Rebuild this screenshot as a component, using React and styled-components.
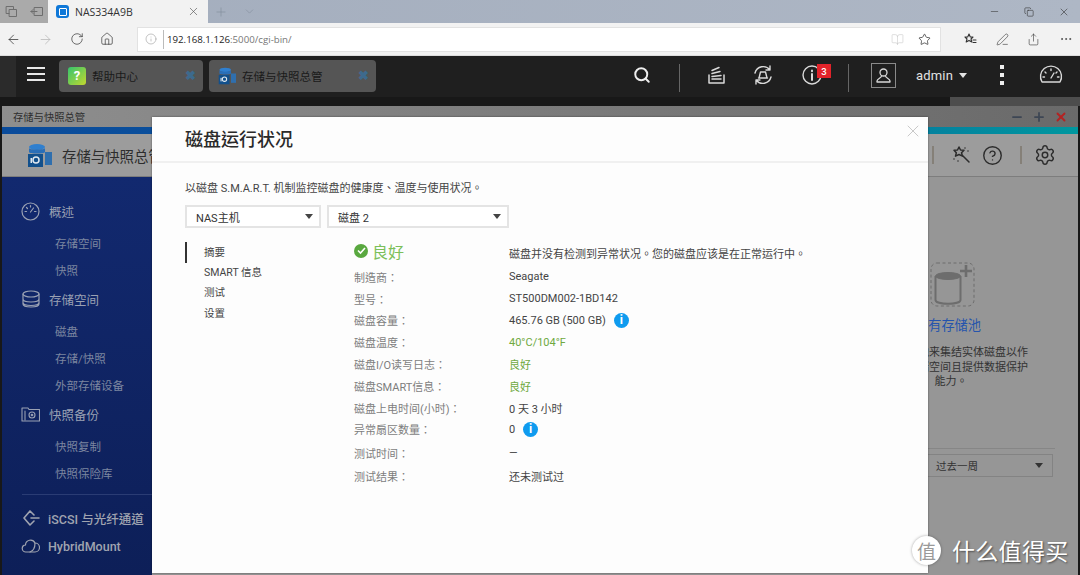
import React from "react";
import styled, { createGlobalStyle } from "styled-components";
import { ArrowLeft, ArrowRight, RotateCw, Home, Info, Star, X, Plus, ChevronDown, Minus, Copy, MoreHorizontal, Search, BookOpen, Share, PenLine, HelpCircle, Settings } from "lucide-react";

const Global = createGlobalStyle`
  html, body { margin: 0; padding: 0; width: 1080px; height: 575px; overflow: hidden; background: #1b1b1b; }
  * { box-sizing: border-box; }
  body { font-family: Roboto, "Noto Sans CJK TC", sans-serif; }
`;
const Page = styled.div`width:1080px;height:575px;display:flex;flex-direction:column;overflow:hidden;`;

/* browser chrome */
const TabStrip = styled.div`height:23px;display:flex;background:linear-gradient(90deg,#a3adbd,#aeb7c5);`;
const StripLeft = styled.div`width:48px;display:flex;align-items:center;gap:12px;padding-left:5px;background:#aaaaaa;color:#6e6e6e;`;
const BrowserTab = styled.div`width:160px;background:#f2f2f2;display:flex;align-items:center;padding:0 8px;color:#333;font:10.5px "Open Sans",sans-serif;`;
const TabLogo = styled.div`width:13px;height:13px;border-radius:3px;background:#0f78d8;margin-right:6px;display:flex;align-items:center;justify-content:center;&::after{content:"";width:6px;height:6px;border:1.5px solid #fff;border-radius:1px;}`;
const TabTitle = styled.span`flex:1;`;
const StripActions = styled.div`display:flex;align-items:center;gap:15px;padding-left:6px;flex:1;color:#85909f;`;
const WinControls = styled.div`display:flex;align-items:center;gap:24px;padding-right:10px;color:#333;`;
const Toolbar = styled.div`height:33px;background:#f2f2f2;display:flex;align-items:center;color:#333;border-bottom:1px solid #ddd;`;
const NavIcons = styled.div`width:137px;display:flex;align-items:center;gap:16.8px;padding-left:6px;`;
const AddressBar = styled.div`width:804px;height:25px;background:#fff;border:1px solid #e2e2e2;display:flex;align-items:center;padding:0 9px 0 7px;`;
const AddressSep = styled.div`width:1px;height:19px;background:#bbb;margin:0 3px 0 6px;`;
const Url = styled.div`flex:1;font:9.7px "Open Sans",sans-serif;color:#777;b{font-weight:400;color:#222;}`;
const AddressIcons = styled.div`display:flex;align-items:center;gap:14px;`;
const ToolIcons = styled.div`flex:1;display:flex;align-items:center;justify-content:space-between;padding:0 7px 0 22px;`;

/* QTS bar */
const QtsBar = styled.div`height:41px;background:#1f1f1f;display:flex;align-items:center;color:#d9d9d9;position:relative;`;
const BarEdge = styled.div`width:16px;height:41px;background:#2b2b2b;`;
const Burger = styled.div`width:18px;margin:0 14px 5px 11px;display:flex;flex-direction:column;gap:4px;span{height:2px;background:#e8e8e8;}`;
const AppTab = styled.div`width:${p=>p.$w}px;height:32px;margin-right:6px;margin-bottom:2px;background:#555555;border-radius:4px;display:flex;align-items:center;padding:0 7px 0 9px;color:#1a1a1a;font-size:11.5px;`;
const AppTabLabel = styled.span`flex:1;margin-left:6px;`;
const AppTabClose = styled.span`color:#3d6a8d;font-size:13px;font-weight:700;`;
const Help = styled.div`width:18px;height:18px;border-radius:3px;background:linear-gradient(135deg,#35c46e,#c3d82e);color:#fff;font-size:13px;font-weight:700;display:flex;align-items:center;justify-content:center;`;
const BarRight = styled.div`margin-left:auto;display:flex;align-items:center;height:100%;`;
const BarSlot = styled.div`width:${p=>p.$w}px;padding-left:${p=>p.$pl||0}px;padding-right:${p=>p.$pr||0}px;display:flex;justify-content:${p=>p.$end?"flex-end":"center"};align-items:center;position:relative;margin-bottom:3px;`;
const BarSep = styled.div`width:1px;height:28px;background:#666;margin-top:2px;`;
const Badge = styled.span`position:absolute;top:-1px;left:42px;width:14px;height:14px;background:#e2232a;color:#fff;font-size:9.5px;font-weight:500;display:flex;align-items:center;justify-content:center;`;
const UserBox = styled.div`width:25px;height:25px;border:1px solid #8a8a8a;display:flex;align-items:center;justify-content:center;`;
const Admin = styled.div`font-size:13px;color:#e2e2e2;display:flex;align-items:center;gap:6px;margin-right:5px;letter-spacing:.2px;&::after{content:"";border:4px solid transparent;border-top:5px solid #e2e2e2;border-bottom:0;}`;
const Dots = styled.div`display:flex;flex-direction:column;gap:4px;span{width:4px;height:4px;background:#eee;}`;

/* desktop */
const Desktop = styled.div`flex:1;position:relative;background:#181818;display:flex;flex-direction:column;padding:9px 2px 0;min-height:0;`;
const DesktopTint = styled.div`position:absolute;right:0;top:0;width:130px;height:9px;background:#4d4d4d;`;
const Win = styled.div`flex:1;display:flex;flex-direction:column;position:relative;min-height:0;`;
const WinTitle = styled.div`height:21px;background:linear-gradient(90deg,#8e8e8e,#7c7c7c 50%,#6a6a6a);display:flex;align-items:center;padding:0 10px 0 11px;color:#2e2e2e;font-size:10.3px;`;
const WinTitleText = styled.span`flex:1;`;
const WinBtns = styled.div`display:flex;align-items:center;gap:8px;`;
const Accent = styled.div`height:7px;background:linear-gradient(90deg,#0a4b9b,#0a5a9d 60%,#00979f);`;
const AppHead = styled.div`height:43px;background:#9c9c9c;border-bottom:1px solid #7d7d7d;display:flex;align-items:center;padding:0 22px 0 25px;color:#2d2d2d;`;
const AppName = styled.div`font-size:14.4px;margin-left:10px;flex:1;white-space:nowrap;`;
const HeadSep = styled.div`width:2px;height:18px;background:#858078;`;
const HeadIcons = styled.div`display:flex;align-items:center;color:#2c2c2c;`;
const Gap = styled.span`width:${p=>p.$w}px;`;
const Body = styled.div`flex:1;display:flex;min-height:0;`;
const Sidebar = styled.div`width:150px;background:linear-gradient(180deg,#12296f,#0d1f58);padding-top:20px;color:#8a93a8;flex-shrink:0;`;
const Group = styled.div``;
const SectionRow = styled.div`height:28px;display:flex;align-items:center;padding-left:19px;font-size:12.5px;color:#9aa1b3;gap:9px;white-space:nowrap;`;
const IconBox = styled.div`width:19px;display:flex;justify-content:center;`;
const SubList = styled.div`padding-top:6px;`;
const SubItem = styled.div`height:27px;line-height:27px;padding-left:53px;font-size:11.5px;color:#7c86a0;`;
const SideDivider = styled.div`height:1px;background:#2a3c74;margin:6px 0 9px 20px;`;
const BigRow = styled(SectionRow)`height:28px;font-weight:500;color:#a0a4b0;gap:8px;`;
const Main = styled.div`flex:1;background:#969696;position:relative;display:flex;justify-content:flex-end;`;
const Empty = styled.div`width:154px;margin-right:50px;display:flex;flex-direction:column;align-items:center;padding-top:85px;`;
const PoolIconWrap = styled.div`color:#6d6d6d;line-height:0;transform:translateX(1px);`;
const PoolTitle = styled.div`font-size:13.2px;color:#2554ad;margin-top:8px;transform:translateX(-3px);`;
const PoolText = styled.div`font-size:11px;line-height:14.5px;color:#333;text-align:center;margin-top:12px;`;
const RangeRow = styled.div`width:160px;position:absolute;right:23px;top:271px;border-top:1px solid #868686;padding:5px 0 0 22px;`;
const Range = styled.div`height:23px;border:1px solid #838383;display:flex;align-items:center;justify-content:space-between;padding:0 9px 0 18px;margin-right:2px;font-size:10.5px;color:#333;&::after{content:"";border:4px solid transparent;border-top:5px solid #333;border-bottom:0;}`;

/* modal */
const Modal = styled.div`position:absolute;left:150px;top:11px;width:776px;height:456px;background:#fdfdfd;box-shadow:0 0 2px rgba(0,0,0,.45);color:#444;`;
const ModalHead = styled.div`height:46px;border-bottom:2px solid #f0f0f0;padding:13px 33px 0;font-size:18px;line-height:20px;font-weight:500;color:#2a2a2a;`;
const ModalClose = styled.div`position:absolute;right:5px;top:4px;color:#c4c4c4;line-height:0;`;
const ModalBody = styled.div`padding:18px 33px 0;`;
const Desc = styled.div`font-size:11px;line-height:15px;color:#444;`;
const Selects = styled.div`display:flex;gap:6px;margin-top:9px;`;
const SelectBox = styled.div`width:${p=>p.$w}px;height:23px;border:2px solid #e4e4e4;background:#fff;display:flex;align-items:center;justify-content:space-between;padding:0 6px 0 9px;font-size:11px;color:#333;&::after{content:"";border:4px solid transparent;border-top:5px solid #444;border-bottom:0;}`;
const Columns = styled.div`display:flex;margin-top:14px;`;
const NavCol = styled.div`width:169px;`;
const NavItem = styled.div`height:20.4px;line-height:20.4px;padding-left:17px;font-size:10.5px;color:#444;border-left:2px solid ${p=>p.$on?"#333":"transparent"};${p=>p.$on?"height:21px;line-height:21px;":""}`;
const Grid = styled.div`display:grid;grid-template-columns:155px 1fr;font-size:11px;`;
const Label = styled.div`height:${p=>p.$h||21.8}px;display:flex;align-items:center;color:#7d7d7d;`;
const Value = styled.div`height:${p=>p.$h||21.8}px;display:flex;align-items:center;gap:8px;color:${p=>p.$g?"#6fa93f":"#444"};`;
const Good = styled(Label)`color:#7cbf5a;font-size:16px;gap:4px;padding-bottom:7px;`;
const GoodMsg = styled(Value)`padding-bottom:2px;`;
const CheckDot = styled.span`width:14px;height:14px;border-radius:50%;background:#59a83f;display:flex;align-items:center;justify-content:center;`;
const InfoDot = styled.span`width:15px;height:15px;border-radius:50%;background:#0f9bef;color:#fff;font:700 12px/15px Roboto,sans-serif;text-align:center;`;

/* watermark */
const Mark = styled.div`position:absolute;left:912px;top:439px;display:flex;align-items:center;gap:11px;color:#fff;font-family:"Noto Sans CJK SC",sans-serif;`;
const MarkDot = styled.div`width:29px;height:29px;border-radius:50%;background:#fff;color:#9a9a9a;font-size:19px;display:flex;align-items:center;justify-content:center;box-shadow:0 0 3px rgba(0,0,0,.35);`;
const MarkText = styled.div`font-size:23px;letter-spacing:.3px;line-height:29px;text-shadow:1px 1px 2px rgba(0,0,0,.5);`;

const Svg = ({ w, h = w, sw = 1.4, children, vb }) => (
  <svg width={w} height={h} viewBox={vb || `0 0 ${w} ${h}`} fill="none" stroke="currentColor" strokeWidth={sw} strokeLinecap="round" strokeLinejoin="round">{children}</svg>
);
const DbLogo = ({ s = 25 }) => (
  <svg width={s} height={s} viewBox="0 0 25 25">
    <ellipse cx="10" cy="4" rx="8" ry="3" fill="#2f7fcf" />
    <path d="M2 5v4c0 2 16 2 16 0V5c0 2-16 2-16 0z" fill="#2a6fb8" />
    <path d="M18 9h7v13h-7z" fill="#2f6fae" />
    <rect x="1" y="11" width="15" height="13" fill="#12508c" />
    <circle cx="9" cy="17" r="3" fill="none" stroke="#dfe8f0" strokeWidth="1.5" />
    <rect x="3.5" y="15" width="1.5" height="5" fill="#dfe8f0" />
  </svg>
);

const rows = [
  ["制造商：", "Seagate"],
  ["型号：", "ST500DM002-1BD142"],
  ["磁盘容量：", "465.76 GB (500 GB)", "i"],
  ["磁盘温度：", "40°C/104°F", "g"],
  ["磁盘I/O读写日志：", "良好", "g"],
  ["磁盘SMART信息：", "良好", "g"],
  ["磁盘上电时间(小时)：", "0 天 3 小时"],
  ["异常扇区数量：", "0", "i"],
];

export default function App() {
  return (
    <Page>
      <Global />
      <TabStrip>
        <StripLeft>
          <Svg w={13} sw={1}><rect x="1.5" y="1.5" width="7" height="7" /><rect x="4.5" y="4.5" width="7" height="7" fill="#aaa" /></Svg>
          <Svg w={13} sw={1}><rect x="4.5" y="2.5" width="8" height="8" /><path d="M1 6.5h6M3 4.5l-2 2 2 2" /></Svg>
        </StripLeft>
        <BrowserTab>
          <TabLogo /><TabTitle>NAS334A9B</TabTitle><X size={13} strokeWidth={1.2} color="#555" />
        </BrowserTab>
        <StripActions><Plus size={14} strokeWidth={1.2} /><ChevronDown size={13} strokeWidth={1.2} /></StripActions>
        <WinControls><Minus size={11} strokeWidth={1.2} /><Copy size={10} strokeWidth={1.4} /><X size={12} strokeWidth={1.2} /></WinControls>
      </TabStrip>
      <Toolbar>
        <NavIcons>
          <ArrowLeft size={15} strokeWidth={1.2} />
          <ArrowRight size={15} strokeWidth={1.2} color="#b5b5b5" />
          <RotateCw size={14} strokeWidth={1.2} />
          <Home size={14} strokeWidth={1.2} />
        </NavIcons>
        <AddressBar>
          <Info size={12} strokeWidth={1} color="#888" />
          <AddressSep />
          <Url><b>192.168.1.126</b>:5000/cgi-bin/</Url>
          <AddressIcons>
            <BookOpen size={13} strokeWidth={1} color="#c4c4c4" />
            <Star size={13} strokeWidth={1.4} color="#333" />
          </AddressIcons>
        </AddressBar>
        <ToolIcons>
          <Svg w={14} sw={1.1}><path d="M6 2l1.3 3H10L8 7l.8 3L6 8.4 3.2 10 4 7 2 5h2.7zM10 8h3M10 10.5h3" /></Svg>
          <PenLine size={13} strokeWidth={1.1} />
          <Share size={13} strokeWidth={1.1} />
          <MoreHorizontal size={14} strokeWidth={1.2} />
        </ToolIcons>
      </Toolbar>
      <QtsBar>
        <BarEdge />
        <Burger><span /><span /><span /></Burger>
        <AppTab $w={144}><Help>?</Help><AppTabLabel>帮助中心</AppTabLabel><AppTabClose>✖</AppTabClose></AppTab>
        <AppTab $w={167}><DbLogo s={18} /><AppTabLabel>存储与快照总管</AppTabLabel><AppTabClose>✖</AppTabClose></AppTab>
        <BarRight>
          <BarSlot $w={72} $pr={3}><Search size={18} strokeWidth={2.6} color="#eee" /></BarSlot>
          <BarSep />
          <BarSlot $w={71}>
            <Svg w={20} sw={1.5}><path d="M3 10v8h15v-8M6 14h9M6 11.5l9-1M6 8.5l8-2M6 5.5l7-3" /></Svg>
          </BarSlot>
          <BarSlot $w={24}>
            <Svg w={22} sw={1.4}><path d="M3 9a8.5 8.5 0 0 1 15-3M19 13a8.5 8.5 0 0 1-15 3M18 2v4h-4M4 20v-4h4" /><path d="M7 14l1.5-6h5L15 14zM6.5 14h9" /></Svg>
          </BarSlot>
          <BarSlot $w={73}>
            <Svg w={20} sw={1.4}><circle cx="10" cy="10" r="9" /><path d="M10 9v6M10 5.5v.8" strokeWidth="2" /></Svg>
            <Badge>3</Badge>
          </BarSlot>
          <BarSep />
          <BarSlot $w={47} $end>
            <UserBox>
              <Svg w={17} sw={1.3}><circle cx="8.5" cy="5.5" r="3.5" /><path d="M6.5 9c0 2-4.5 2.5-4.5 5v1h13v-1c0-2.5-4.500-3-4.500-5" /></Svg>
            </UserBox>
          </BarSlot>
          <BarSlot $w={96}><Admin>admin</Admin></BarSlot>
          <BarSlot $w={20}><Dots><span /><span /><span /></Dots></BarSlot>
          <BarSlot $w={68} $pl={10}>
            <Svg w={24} h={20} sw={1.4}><path d="M3 17a10.5 10.5 0 1 1 18 0zM12 13l3-5M12 4v1.5M6 7l1 1M18 7l-1 1M4 12h1.5M20 12h-1.5" /></Svg>
          </BarSlot>
        </BarRight>
      </QtsBar>
      <Desktop>
        <DesktopTint />
        <Win>
          <WinTitle>
            <WinTitleText>存储与快照总管</WinTitleText>
            <WinBtns>
              <Minus size={14} strokeWidth={3} color="#3d4654" />
              <Plus size={14} strokeWidth={3} color="#3d4654" />
              <X size={14} strokeWidth={3.2} color="#b32323" />
            </WinBtns>
          </WinTitle>
          <Accent />
          <AppHead>
            <DbLogo />
            <AppName>存储与快照总管</AppName>
            <HeadIcons>
              <HeadSep />
              <Gap $w={17} />
              <Svg w={20} sw={1.5}><path d="M8 2l1.5 3 3.5.2-2.5 2.6 1 3.4L8 9.5 4.5 11.2l.8-3.4L3 5.2 6.5 5zM11 10l7 7" /><path d="M14 3v.1M17 6v.1M3 14v.1M7 16v.1" /></Svg>
              <Gap $w={11} />
              <HelpCircle size={21} strokeWidth={1.6} />
              <Gap $w={17} />
              <HeadSep />
              <Gap $w={12} />
              <Settings size={22} strokeWidth={1.6} />
            </HeadIcons>
          </AppHead>
          <Body>
            <Sidebar>
              <Group>
                <SectionRow><IconBox><Svg w={19} sw={1.2}><circle cx="9.5" cy="9.5" r="8.5" /><path d="M9.5 10l3-4M9.5 3.5v1.5M4 9.5h1.5M15 9.5h-1.5M5.5 5.5l1 1" /></Svg></IconBox>概述</SectionRow>
                <SubList><SubItem>存储空间</SubItem><SubItem>快照</SubItem></SubList>
              </Group>
              <Group>
                <SectionRow><IconBox><Svg w={18} sw={1.2}><ellipse cx="9" cy="4" rx="8" ry="3" /><path d="M1 4v10c0 4 16 4 16 0V4M1 9c0 4 16 4 16 0M1 12.5c0 4 16 4 16 0" /></Svg></IconBox>存储空间</SectionRow>
                <SubList><SubItem>磁盘</SubItem><SubItem>存储/快照</SubItem><SubItem>外部存储设备</SubItem></SubList>
              </Group>
              <Group>
                <SectionRow><IconBox><Svg w={19} h={15} sw={1.1}><path d="M1 1h6l1 1.5h10.5V14H1z" /><circle cx="11" cy="8" r="3" /><circle cx="11" cy="8" r=".8" /><path d="M4 4v9" /></Svg></IconBox>快照备份</SectionRow>
                <SubList><SubItem>快照复制</SubItem><SubItem>快照保险库</SubItem></SubList>
              </Group>
              <SideDivider />
              <BigRow><IconBox><Svg w={18} h={16} sw={1.6}><path d="M8 1L2 8l6 7M8 1l4 4M8 15l4-4M9 8h8" /></Svg></IconBox>iSCSI 与光纤通道</BigRow>
              <BigRow><IconBox><Svg w={19} h={14} sw={1.2}><path d="M5 13a3.5 3.5 0 0 1-.5-7A5 5 0 0 1 14 4a4.5 4.5 0 0 1 0 9z" /><path d="M9 13c3-1 5-4 5-9" /></Svg></IconBox>HybridMount</BigRow>
            </Sidebar>
            <Main>
              <Empty>
                <PoolIconWrap>
                  <svg width="45" height="45" viewBox="0 0 45 45" fill="none" stroke="currentColor">
                    <rect x="1" y="1" width="43" height="43" rx="6" strokeDasharray="3 2.5" strokeWidth="1" />
                    <ellipse cx="18" cy="14" rx="12.5" ry="3.5" fill="currentColor" />
                    <path d="M5.5 14v24c0 5 25 5 25 0V14" strokeWidth="2" />
                    <path d="M36 3v12M30 9h12" strokeWidth="2.6" />
                  </svg>
                </PoolIconWrap>
                <PoolTitle>没有存储池</PoolTitle>
                <PoolText>使用存储池来集结实体磁盘以作<br />为一个存储空间且提供数据保护<br />能力。</PoolText>
              </Empty>
              <RangeRow><Range>过去一周</Range></RangeRow>
            </Main>
          </Body>
          <Modal>
            <ModalHead>磁盘运行状况</ModalHead>
            <ModalClose><X size={20} strokeWidth={1.1} /></ModalClose>
            <ModalBody>
              <Desc>以磁盘 S.M.A.R.T. 机制监控磁盘的健康度、温度与使用状况。</Desc>
              <Selects>
                <SelectBox $w={136}>NAS主机</SelectBox>
                <SelectBox $w={182}>磁盘 2</SelectBox>
              </Selects>
              <Columns>
                <NavCol>
                  <NavItem $on>摘要</NavItem>
                  <NavItem>SMART 信息</NavItem>
                  <NavItem>测试</NavItem>
                  <NavItem>设置</NavItem>
                </NavCol>
                <Grid>
                  <Good $h={24}>
                    <CheckDot><svg width="9" height="9" viewBox="0 0 9 9" fill="none" stroke="#fff" strokeWidth="1.6"><path d="M1 4.5l2.5 2.5L8 2" /></svg></CheckDot>
                    良好
                  </Good>
                  <GoodMsg $h={24}>磁盘并没有检测到异常状况。您的磁盘应该是在正常运行中。</GoodMsg>
                  {rows.map(([l, v, k]) => (
                    <React.Fragment key={l}>
                      <Label>{l}</Label>
                      <Value $g={k === "g"}>{v}{k === "i" && <InfoDot>i</InfoDot>}</Value>
                    </React.Fragment>
                  ))}
                  <Label $h={25}>测试时间：</Label><Value $h={25}>—</Value>
                  <Label $h={22}>测试结果：</Label><Value $h={22}>还未测试过</Value>
                </Grid>
              </Columns>
            </ModalBody>
          </Modal>
        </Win>
        <Mark><MarkDot>值</MarkDot><MarkText>什么值得买</MarkText></Mark>
      </Desktop>
    </Page>
  );
}
